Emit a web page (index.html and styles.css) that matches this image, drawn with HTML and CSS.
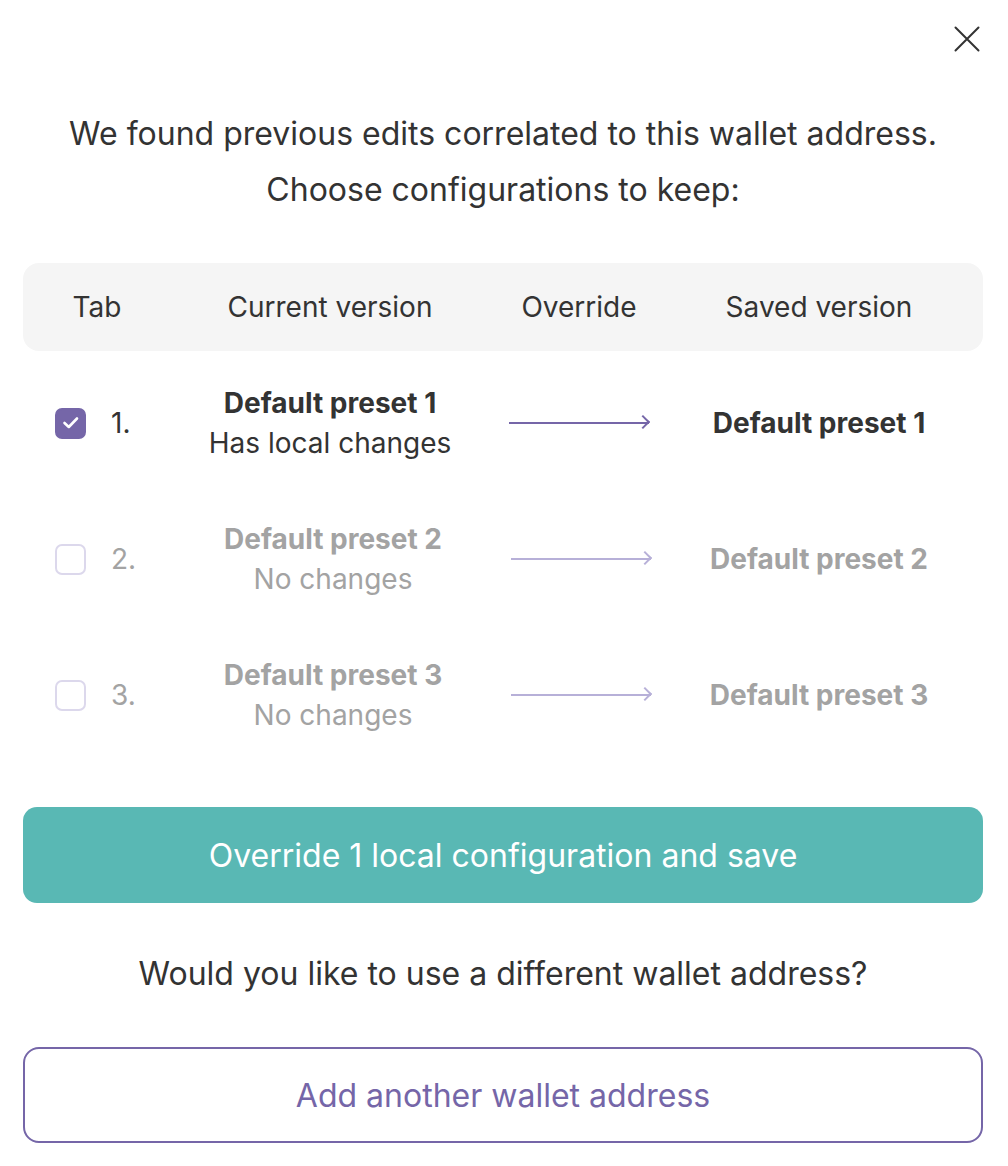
FILE: index.html
```html
<!DOCTYPE html>
<html lang="en">
<head>
<meta charset="utf-8">
<title>Choose configurations</title>
<link rel="stylesheet" href="styles.css">
</head>
<body>
<div class="modal">
  <div class="topbar">
    <button class="close" aria-label="Close">
      <svg width="26" height="26" viewBox="0 0 26 26"><path d="M1.5 1.5L24.5 24.5M24.5 1.5L1.5 24.5" stroke="#333" stroke-width="2" stroke-linecap="round"/></svg>
    </button>
  </div>
  <p class="intro">We found previous edits correlated to this wallet address.<br>Choose configurations to keep:</p>
  <div class="thead">
    <div>Tab</div>
    <div>Current version</div>
    <div>Override</div>
    <div>Saved version</div>
  </div>
  <div class="row active">
    <div class="tab"><span class="check on"><svg width="18" height="16" viewBox="0 0 18 16"><path d="M2.5 8L6.8 12L15 3.5" fill="none" stroke="#fff" stroke-width="2.6" stroke-linecap="round" stroke-linejoin="round"/></svg></span><span class="num">1.</span></div>
    <div class="cur"><b>Default preset 1</b><span>Has local changes</span></div>
    <div class="ovr"><span class="arrow"></span></div>
    <div class="saved"><b>Default preset 1</b></div>
  </div>
  <div class="row muted">
    <div class="tab"><span class="check"></span><span class="num">2.</span></div>
    <div class="cur"><b>Default preset 2</b><span>No changes</span></div>
    <div class="ovr"><span class="arrow"></span></div>
    <div class="saved"><b>Default preset 2</b></div>
  </div>
  <div class="row muted">
    <div class="tab"><span class="check"></span><span class="num">3.</span></div>
    <div class="cur"><b>Default preset 3</b><span>No changes</span></div>
    <div class="ovr"><span class="arrow"></span></div>
    <div class="saved"><b>Default preset 3</b></div>
  </div>
  <button class="primary">Override 1 local configuration and save</button>
  <p class="question">Would you like to use a different wallet address?</p>
  <button class="secondary">Add another wallet address</button>
</div>
</body>
</html>
```
FILE: styles.css
```css
* { box-sizing: border-box; }
html, body { margin: 0; background: #fff; }
body { font-family: Inter, "Noto Sans", sans-serif; color: #333; }
.modal { padding: 0 23px 0 23px; width: 1006px; }
.topbar { height: 106px; display: flex; justify-content: flex-end; align-items: flex-start; }
.close { margin-top: 26px; margin-right: 3px; width: 26px; height: 26px; padding: 0; border: 0; background: none; display: block; }
.close svg { display: block; }
.intro { margin: 0; text-align: center; font-size: 32px; line-height: 56px; color: #333; }
.thead { margin-top: 45px; height: 88px; background: #f5f5f5; border-radius: 16px; display: grid; grid-template-columns: 148px 318px 180px 300px; align-items: center; font-size: 28px; color: #333; text-align: center; margin-bottom: 4px; }
.row { height: 136px; display: grid; grid-template-columns: 148px 318px 180px 300px; align-items: center; text-align: center; font-size: 28px; }
.tab { display: flex; align-items: center; padding-left: 32px; }
.check { width: 31px; height: 31px; border-radius: 7px; border: 2px solid #dcd8ec; display: flex; align-items: center; justify-content: center; }
.check.on { background: #7566a8; border-color: #7566a8; }
.num { margin-left: 25px; }
.cur { display: flex; flex-direction: column; line-height: 40px; }
.cur b, .saved b { font-weight: 700; }
.ovr { display: flex; justify-content: center; }
.arrow { position: relative; width: 140px; height: 2px; background: #7566a8; }
.arrow::after { content: ""; position: absolute; right: 1px; top: -5px; width: 10px; height: 10px; border-top: 2px solid #7566a8; border-right: 2px solid #7566a8; transform: rotate(45deg); box-sizing: border-box; }
.muted { color: #a3a3a3; }
.muted .cur { padding-left: 6px; }
.muted .arrow { background: #b7b0d8; margin-left: 4px; }
.muted .arrow::after { border-color: #b7b0d8; }
.active { color: #333; }
.primary { display: block; width: 100%; margin-top: 44px; height: 96px; border: 0; border-radius: 14px; background: #59b8b4; color: #fff; font-family: inherit; font-size: 32px; }
.question { margin: 43px 0 45px; text-align: center; font-size: 32px; line-height: 56px; color: #333; }
.secondary { display: block; width: 100%; height: 96px; border: 2px solid #7566a8; border-radius: 16px; background: #fff; color: #7566a8; font-family: inherit; font-size: 32px; }
```
